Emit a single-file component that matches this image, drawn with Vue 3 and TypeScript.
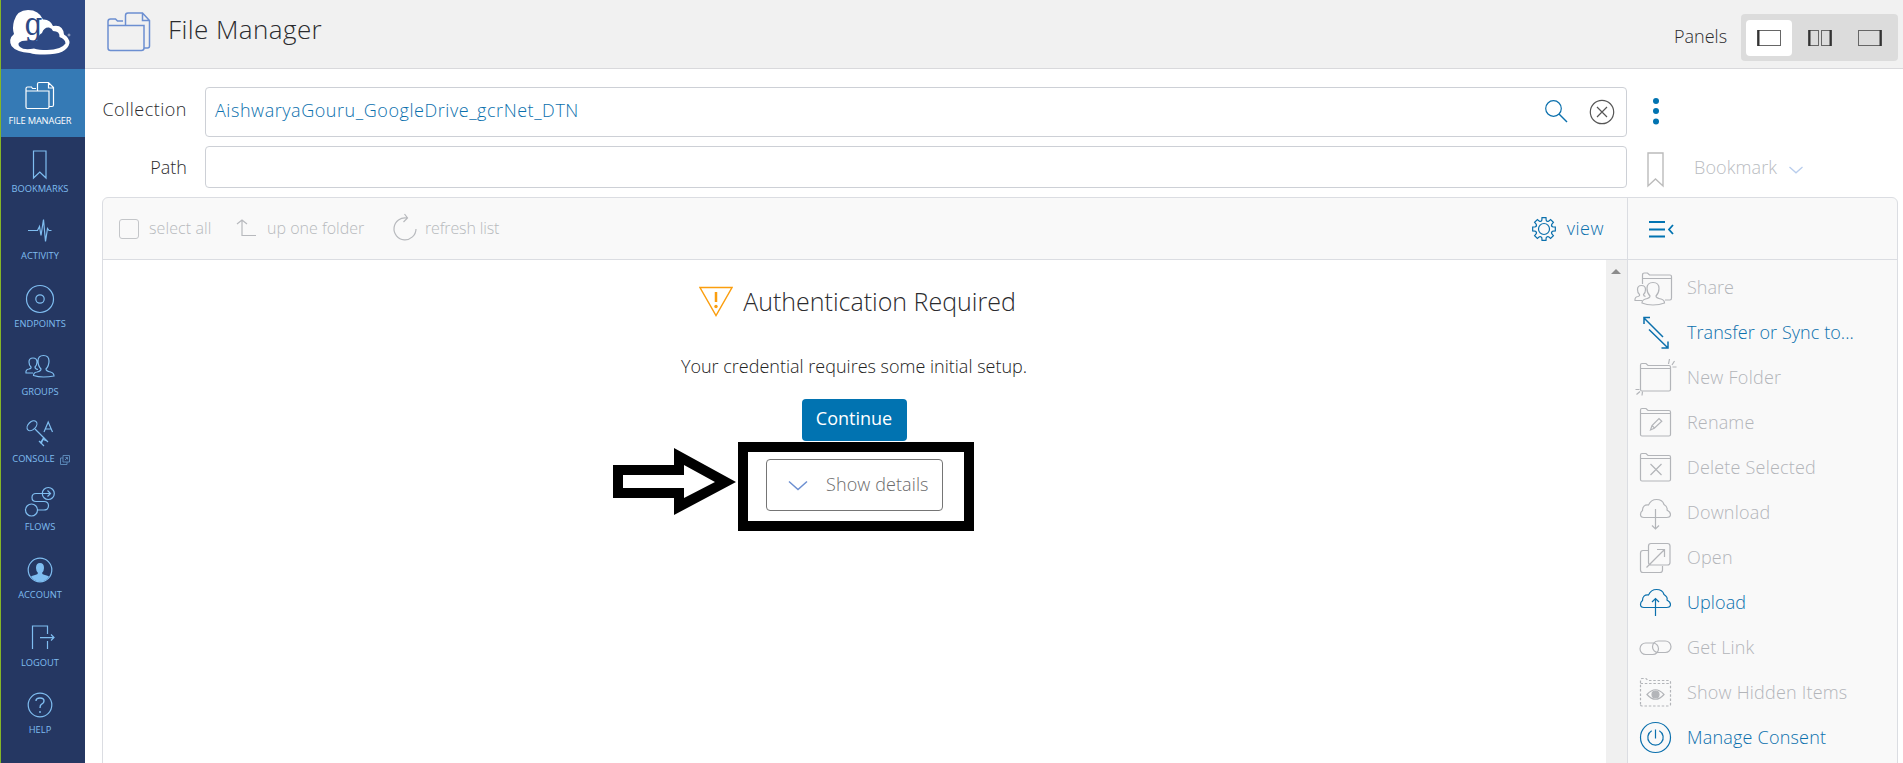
<script setup lang="ts">
interface NavItem {
  label: string
  icon: string
  active?: boolean
  external?: boolean
}
interface Action {
  label: string
  icon: string
  enabled?: boolean
  spacing: number
}

const folder = '<path d="M5.500 31.500V7q0-1.500 1.500-1.500h4l2 2H34q1.500 0 1.500 1.500v22.500q0 1.500-1.500 1.500H7q-1.500 0-1.500-1.500zM5.500 10.500H35.500"/>'
const cloud = '<path d="M9 24.500H31.500q4 0 4-3 0-2.500-3.500-4.500 1-3-3-5.500-1.500-5-7.500-5-5.500 0-8 5.500-6-.5-6 5.500-2 1.500-2 4 0 3 3.500 3z"/>'

const nav: NavItem[] = [
  { label: 'FILE MANAGER', active: true, icon: '<path d="M26 22v16q0 1.500 1.500 1.500h20q1.500 0 1.500-1.500V22H26v-2.500q0-1.500 1.500-1.500h4l1 1.500H36M37.500 22v-7q0-1.500 1.500-1.500h9.500l5 5V36q0 1.500-1.500 1.500h-3M48.500 14v5h5"/>' },
  { label: 'BOOKMARKS', icon: '<path d="M33.500 14h12.500v27l-6.200-6-6.300 6z"/>' },
  { label: 'ACTIVITY', icon: '<path d="M28 26.500h9.500l2-4 1.500 9 2.500-16 2 22 2-13 1.500 2h2.500"/>' },
  { label: 'ENDPOINTS', icon: '<circle cx="40" cy="27" r="13.500"/><circle cx="40" cy="27" r="4.200"/>' },
  { label: 'GROUPS', icon: '<path d="M41 29q-3-3-3-8 0-5.500 5.500-5.500t5.500 5.500q0 5-3 8 0 2 4.500 3 3.500 1 3.500 4-5 1-10.500 1t-10-1.500q0-3 3.500-3.500 4-1 4-3zM33 33h-7q-.5-3.500 3-4 2.500-.5 2-2-2-2-2-5 0-4 4-4t4 4q0 3-2 5 0 2 3 2.500"/>' },
  { label: 'CONSOLE', external: true, icon: '<ellipse cx="32" cy="18.700" rx="5.800" ry="3.800" transform="rotate(-45 32 18.700)"/><path d="M35 22L48 35M40.500 35.500l3.500-5M39 34l5 5M42 32l5 2M44 30l-3 7M44 25l4.200-10 4.300 10M45.500 22h5.500"/>' },
  { label: 'FLOWS', icon: '<circle cx="48.300" cy="18.500" r="6"/><circle cx="31.500" cy="35" r="6"/><path d="M50 18.500H36q-4 0-4 4t4 4h8q4.500 0 4.500 4.200t-4.500 4.300h-6M47.500 15.500l3 3-3 3"/>' },
  { label: 'ACCOUNT', icon: '<circle cx="40" cy="27" r="11.800"/><path fill="currentColor" stroke="none" d="M38 30q-2-2-2-5 0-5 4-5t4 5q0 3-2 5 0 1.500 3 2 3 .6 4 1.500-3 5-9 5t-9-5q1-.9 4-1.500 3-.5 3-2z"/>' },
  { label: 'LOGOUT', icon: '<path d="M32.500 38V15h15v8M47.500 30v8M40 26.600h14M51 23.500l3 3-3 3"/>' },
  { label: 'HELP', icon: '<circle cx="40" cy="27" r="11.800"/><path stroke-width="1.400" d="M36 23q0-3 4-3t4 3q0 2-2.300 3.200Q40 27 40 30M40 33v2"/>' },
]

const actions: Action[] = [
  { label: 'Share', spacing: 0, icon: '<path d="M7.500 16V7q0-2 2-2h3l2 2H35q1.500 0 1.500 1.500V30q0 2-1.500 2h-5M8 10.500h28M15 28q-3-3-3-7.500 0-6 6-6t6 6q0 4.500-3 7.500 0 2 5 3 3.500 1 3.500 4-5 2-11.500 2t-11-2q0-3 3.500-4 4.500-1 4.500-3zM7 32.500H0q-.5-3.500 3-4 2-.5 1.500-2-2-1.500-2-5 0-4 4-4t4 4q0 3.500-2 5 0 1.500 2 2"/>' },
  { label: 'Transfer or Sync to...', enabled: true, spacing: 0.06, icon: '<g stroke-width="1.500"><path d="M8.500 4.500L28 24M9 11V4.500h6M14 16.500L33 35M33 28.500V35h-6.500"/></g>' },
  { label: 'New Folder', spacing: 0.25, icon: folder + '<path d="M33.500 6l1-5M37 7l2.500-4M37.500 9h4M.5 31.500h4M1.500 36.500l3.500-3M7 37.500l.5-4"/>' },
  { label: 'Rename', spacing: 0.15, icon: folder + '<path d="M15.500 27l1.500-4.500 7-7 2.800 2.800-7.500 7zM17 22.500l2.800 2.800"/>' },
  { label: 'Delete Selected', spacing: 0.2, icon: folder + '<path d="M15.500 16l11 11M26.500 16l-11 11"/>' },
  { label: 'Download', spacing: 0.2, icon: cloud + '<path d="M20.500 16v20M17 32.500l3.500 3.500 3.500-3.500"/>' },
  { label: 'Open', spacing: 0.2, icon: '<path d="M13.500 12.500H8q-2.500 0-2.500 2.500v17q0 2.500 2.500 2.500h17q2.500 0 2.500-2.500v-4M16 5.500h16.500q2.500 0 2.500 2.500v16.500q0 2.500-2.500 2.500H16q-2.500 0-2.500-2.500V8q0-2.500 2.500-2.500zM11.500 29.500l17.500-17.500M22 11.500h7.500v7.500"/>' },
  { label: 'Upload', enabled: true, spacing: 0.1, icon: cloud + '<path d="M20.500 33V15.500M17 19l3.500-3.500 3.500 3.500"/>' },
  { label: 'Get Link', spacing: 0.15, icon: '<rect x="5" y="15" width="18.500" height="11.500" rx="5.700"/><rect x="17.500" y="13" width="18.500" height="11.500" rx="5.700"/>' },
  { label: 'Show Hidden Items', spacing: 0.2, icon: '<g stroke-dasharray="2.500 1.800">' + folder + '</g><path d="M12 21.500q8.500-9.500 17 0-8.500 9.500-17 0z"/><circle cx="20.500" cy="21.500" r="3.500" fill="currentColor"/>' },
  { label: 'Manage Consent', enabled: true, spacing: 0.2, icon: '<circle cx="20.500" cy="19.500" r="15"/><path d="M16.700 12.800a7.700 7.700 0 1 0 7.600 0M20.500 11.500v9"/>' },
]

const gear: string = Array.from({ length: 8 }, (_, i) => {
  const at = (deg: number, r: number) => {
    const a = ((i * 45 + deg) * Math.PI) / 180
    return `${(12 + r * Math.sin(a)).toFixed(2)} ${(12 - r * Math.cos(a)).toFixed(2)}`
  }
  return `${i ? 'L' : 'M'}${at(-10, 11.5)}L${at(10, 11.5)}L${at(14, 9)}Q${at(22.5, 7.6)} ${at(31, 9)}`
}).join('') + 'Z'
</script>

<template>
  <div class="app">
    <nav class="sidebar">
      <div class="logo">
        <svg width="84" height="69" viewBox="1 0 84 69">
          <path fill="#fff" d="M14 34Q12 28 14 21 17 10 28 10 39 10 43 19.500 50 19 53 26 63 24 64 34.500 69.500 38 69.500 43 67 54.500 45 54.500 34 54.500 30 53 16 52 11.500 46 8 39 14 34z" />
          <path fill="#2e4984" d="M37 41Q38 35 42 33 44 27 49 27.500 52 28 53 31 60 31 59.500 37 65.500 39 65.500 43.500 61 50 47 50 39 50 34 48.500 24 50.500 20 47 16 43 22 41 27 40 37 41z" />
          <text x="24.500" y="34.500" class="logo-g">g</text>
          <circle cx="69" cy="35" r="1" fill="none" stroke="#fff" stroke-width=".5" />
        </svg>
      </div>
      <div v-for="n in nav" :key="n.label" class="nav-item" :class="{ active: n.active }">
        <svg width="80" height="45" viewBox="0 0 80 45" class="line" v-html="n.icon" />
        <span class="nav-label">{{ n.label }}<svg v-if="n.external" class="ext" width="10" height="10" viewBox="0 0 10 10"><path d="M3 3H.500v6.500H7V7M3 .500h6.500V7H3zM5 5l2.500-2.500M5.500 2.500h2v2" /></svg></span>
      </div>
    </nav>

    <main class="main">
      <header class="header">
        <svg class="line head-icon" width="44" height="40" viewBox="0 0 44 40">
          <path stroke-width="1.500" d="M1 13.500V36q0 2.500 2.500 2.500h31Q37 38.500 37 36V13.500zM1 13.500V9.500Q1 7 3.500 7h5l2 2H16M18.500 13V3.500q0-2.500 2.500-2.500h14.500l7 7.500V34q0 2-2 2H37M35.500 1v7.500h7" />
        </svg>
        <h1>File Manager</h1>
        <span class="panels-label">Panels</span>
        <div class="panels">
          <span class="pbtn on"><svg width="24" height="16" viewBox="0 0 24 16"><rect x=".5" y=".5" width="23" height="15" /><path d="M1.500 0v16" class="thick" /></svg></span>
          <span class="pbtn"><svg width="24" height="16" viewBox="0 0 24 16"><rect x=".5" y=".5" width="10" height="15" /><rect x="13.500" y=".5" width="10" height="15" /><path d="M1.500 0v16M22.500 0v16" class="thick" /></svg></span>
          <span class="pbtn"><svg width="24" height="16" viewBox="0 0 24 16"><rect x=".5" y=".5" width="23" height="15" /><path d="M22.500 0v16" class="thick" /></svg></span>
        </div>
      </header>

      <div class="field-row collection">
        <label>Collection</label>
        <div class="input">
          <span class="value">AishwaryaGouru_GoogleDrive_gcrNet_DTN</span>
          <svg class="line blue" width="24" height="24" viewBox="0 0 24 24"><circle cx="9.500" cy="9.500" r="7.800" /><path d="M15 15l8 8" stroke-width="1.500" /></svg>
          <svg class="line dark" width="26" height="26" viewBox="0 0 26 26"><circle cx="13" cy="13" r="11.700" /><path d="M8 8l10 10M18 8L8 18" /></svg>
        </div>
        <svg class="dots" width="8" height="28" viewBox="0 0 8 28"><circle cx="4" cy="4" r="3" /><circle cx="4" cy="14" r="3" /><circle cx="4" cy="24.500" r="3" /></svg>
      </div>
      <div class="field-row path">
        <label>Path</label>
        <div class="input" />
        <svg class="line bm" width="17" height="36" viewBox="0 0 17 36"><path d="M1 1h15v33l-7.500-7L1 34z" stroke-width="1.400" /></svg>
        <span class="bm-label">Bookmark</span>
        <svg class="line bm-chev" width="14" height="8" viewBox="0 0 14 8"><path d="M.500 1L7 6.800 13.500 1" stroke-width="1.300" /></svg>
      </div>

      <section class="browser">
        <div class="files">
          <div class="toolbar">
            <span class="checkbox" />
            <span class="t-select">select all</span>
            <svg class="line t-up" width="20" height="20" viewBox="0 0 20 20"><path d="M6 2v15.500h14M1 6l5-4 5 4" /></svg>
            <span class="t-folder">up one folder</span>
            <svg class="line t-ref" width="24" height="28" viewBox="0 0 24 28"><path d="M14 5A11 11 0 1 0 23 16M11.500 1l3 4-4 4" /></svg>
            <span class="t-refresh">refresh list</span>
            <span class="view">
              <svg class="line" width="24" height="24" viewBox="0 0 24 24"><path :d="gear" /><circle cx="12" cy="12" r="5.500" /></svg>
              <span>view</span>
            </span>
          </div>
          <div class="list">
            <div class="auth">
              <div class="auth-head">
                <svg width="34" height="31" viewBox="0 0 34 31"><path d="M1 1.500h32L17 29.500z" fill="none" stroke="#fb9e0e" stroke-width="1.400" /><path d="M17 6v10" stroke="#fb9e0e" stroke-width="2.500" /><circle cx="17" cy="20.500" r="1.700" fill="#fb9e0e" /></svg>
                <h2>Authentication Required</h2>
              </div>
              <p>Your credential requires some initial setup.</p>
              <button class="continue">Continue</button>
              <div class="highlight">
                <button class="details">
                  <svg class="line" width="20" height="12" viewBox="0 0 20 12"><path d="M1 1.500l9 8 9-8" stroke-width="1.500" /></svg>
                  <span>Show details</span>
                </button>
                <svg class="arrow" width="124" height="68" viewBox="613 448 124 68">
                  <path fill-rule="evenodd" d="M613 465h61v-17l62 34-62 33v-17h-61zM623 475v13h61v10l31-16-31-17v10z" />
                </svg>
              </div>
            </div>
            <div class="scrollbar"><svg width="10" height="6" viewBox="0 0 10 6"><path d="M0 5L5 0l5 5z" fill="#8b8b8b" /></svg></div>
          </div>
        </div>
        <aside class="actions">
          <div class="collapse"><svg width="26" height="18" viewBox="0 0 26 18"><path d="M0 2h16M0 9.500h16M0 16.500h16M24 5l-4 4.500 4 4.500" fill="none" stroke="#0173b1" stroke-width="1.800" /></svg></div>
          <div v-for="a in actions" :key="a.label" class="action" :class="{ enabled: a.enabled }">
            <svg class="line" width="42" height="40" viewBox="0 0 42 40" v-html="a.icon" />
            <span :style="{ letterSpacing: a.spacing + 'px' }">{{ a.label }}</span>
          </div>
        </aside>
      </section>
    </main>
  </div>
</template>

<style>
html, body { overflow: hidden; background: #fff; }
</style>

<style scoped>
* { box-sizing: border-box; }
.app { display: flex; width: 1903px; height: 763px; overflow: hidden; font: 300 18px/24px "Open Sans", "Noto Sans", sans-serif; color: #2b2b2e; background: #fff; }
svg { display: block; flex: none; }
span, h1, h2, p, label { white-space: nowrap; }
.line { fill: none; stroke: currentColor; stroke-width: 1.2; overflow: visible; }
.sidebar { width: 85px; flex: none; background: #253762; border-left: 1px solid #84b527; }
.logo { height: 69px; background: #2e4984; }
.logo-g { font: 31px "DejaVu Serif Condensed", "DejaVu Serif", serif; font-stretch: condensed; fill: #2e4984; }
.nav-item { height: 67.7px; color: #7fbdf0; padding-right: 5px; margin-left: -1px; border-left: 1px solid #84b527; }
.nav-item > svg { margin-left: -1px; }
.nav-item.active { background: #357ab5; color: #fff; }
.nav-label { display: flex; justify-content: center; align-items: center; height: 14px; font: 400 9.300px/14px "Open Sans", sans-serif; margin-left: -1px; }
.active .nav-label { letter-spacing: -.15px; }
.ext { margin: 1px -2px 0 5px; fill: none; stroke: currentColor; opacity: .6; }
.main { flex: 1; min-width: 0; }
.header { height: 69px; background: #f1f1f1; border-bottom: 1px solid #d9d9dc; display: flex; }
.head-icon { margin: 12px 0 0 22px; color: #6c8fd1; }
h1 { margin: 11px 0 0 17px; font-weight: 300; font-size: 26px; line-height: 36px; width: 1506px; letter-spacing: .42px; }
.panels-label { margin-top: 24px; width: 67px; }
.panels { margin-top: 14px; width: 157px; height: 47px; background: #dcdcdc; border-radius: 4px; padding: 6px 5px; display: flex; gap: 5px; }
.pbtn { width: 46px; height: 36px; border-radius: 4px; display: flex; align-items: center; justify-content: center; }
.pbtn.on { background: #fff; }
.pbtn svg { fill: none; stroke: #666; }
.pbtn .thick { stroke: #333; stroke-width: 2; }
.field-row { display: flex; }
.field-row label { width: 102px; text-align: right; margin-right: 18px; }
.input { width: 1422px; border: 1px solid #cdd0d6; border-radius: 4px; display: flex; }
.collection { margin-top: 18px; }
.collection .input { height: 50px; padding: 11px 11px 0 9px; color: #0b70ad; }
.collection label { padding-top: 10px; letter-spacing: .5px; }
.value { flex: 1; letter-spacing: .55px; margin-top: -1px; }
.blue { margin-right: 21px; }
.dark { color: #555; }
.dots { margin: 10px 0 0 24.500px; fill: #0173b1; }
.path { margin-top: 9px; color: #b9bcc1; }
.path label { color: #2b2b2e; padding-top: 9px; }
.path .input { height: 42px; }
.bm { margin: 6px 21px 0 20px; color: #bbb; }
.bm-label { margin: 9px 0 0 9px; width: 95px; letter-spacing: .1px; }
.bm-chev { margin-top: 20px; color: #b9cdec; }
.browser { margin: 9px 0 0 17px; width: 1796px; height: 580px; border: 1px solid #dbdde2; border-radius: 6px; display: flex; background: #f9f9f9; }
.files { width: 1525px; border-right: 1px solid #dbdde2; }
.toolbar { height: 62px; border-bottom: 1px solid #dbdde2; display: flex; color: #b7b9bd; font-size: 16px; padding: 0 23px 0 16px; }
.checkbox { width: 20px; height: 20px; border: 1px solid #c4c6c9; border-radius: 3px; margin-top: 21px; }
.t-select, .t-folder, .t-refresh { margin-top: 18px; }
.t-select { margin-left: 10px; width: 87px; letter-spacing: .1px; }
.t-up { margin-top: 20px; }
.t-folder { margin-left: 11px; width: 126px; }
.t-ref { margin-top: 15px; }
.t-refresh { margin-left: 8px; letter-spacing: -.15px; }
.view { margin-left: auto; display: flex; gap: 11px; color: #0b70ad; font-size: 18px; margin-top: 19px; letter-spacing: .5px; }
.view span { margin-top: -1px; }
.list { display: flex; height: 517px; background: #fff; }
.auth { flex: 1; padding-right: 1px; display: flex; flex-direction: column; align-items: center; }
.auth-head { display: flex; margin: 26px 0 0 7px; }
h2 { margin: -2px 0 1px 10px; font-weight: 300; font-size: 25px; line-height: 34px; }
p { margin: 35px 0 21px; color: #222; }
.continue { width: 105px; height: 42px; border: 0; border-radius: 4px; background: #0173b1; color: #fff; font: 400 18px/24px "Open Sans", sans-serif; padding: 0 0 4px; }
.highlight { position: relative; left: 2px; width: 236px; height: 89px; margin-top: 1px; border: 10px solid #000; padding: 7px 0 0 18px; }
.details { display: flex; align-items: center; width: 177px; height: 52px; border: 1px solid #757575; border-radius: 4px; background: #fff; font: 300 18px/24px "Open Sans", sans-serif; letter-spacing: .1px; color: #6b6b6b; padding: 0 0 3px 21px; gap: 18px; }
.details svg { color: #6c8fd1; margin-top: 5px; }
.arrow { position: absolute; left: -135px; top: -4px; }
.scrollbar { width: 21px; background: #f0f0f0; padding: 9px 0 0 5px; }
.actions { flex: 1; }
.collapse { height: 62px; border-bottom: 1px solid #dbdde2; padding: 22px 0 0 21px; }
.action { height: 45px; display: flex; align-items: flex-start; padding: 8px 0 0 7px; color: #b3b5b9; }
.action > span { margin: 7px 0 0 10px; }
.action.enabled { color: #0b70ad; }
</style>
